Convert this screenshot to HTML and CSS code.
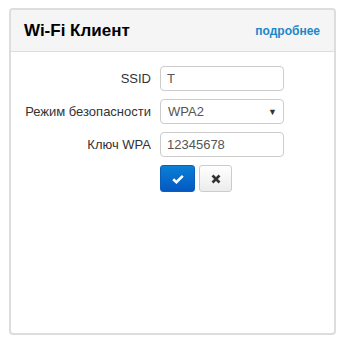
FILE: index.html
```html
<!DOCTYPE html>
<html lang="ru">
<head>
<meta charset="UTF-8">
<title>Wi-Fi Клиент</title>
<link rel="stylesheet" href="styles.css">
</head>
<body>
  <div class="panel">
    <div class="panel__head">
      <div class="panel__title">Wi-Fi Клиент</div>
      <a class="panel__more" href="#">подробнее</a>
    </div>
    <div class="panel__body">
      <div class="row">
        <label class="row__label" for="ssid">SSID</label>
        <input class="field" id="ssid" type="text" value="T">
      </div>
      <div class="row">
        <label class="row__label" for="mode">Режим безопасности</label>
        <div class="field field--select" id="mode">WPA2<span class="caret">▼</span></div>
      </div>
      <div class="row">
        <label class="row__label" for="key">Ключ WPA</label>
        <input class="field" id="key" type="text" value="12345678">
      </div>
      <div class="buttons">
        <button class="btn btn--ok">
          <svg width="12" height="10" viewBox="0 0 12 10"><path d="M1.2 5.2 L4.4 8.2 L10.8 1.8" fill="none" stroke="#fff" stroke-width="2.6"/></svg>
        </button>
        <button class="btn btn--cancel">
          <svg width="10" height="10" viewBox="0 0 10 10"><path d="M1.5 1.5 L8.5 8.5 M8.5 1.5 L1.5 8.5" fill="none" stroke="#333" stroke-width="2.6"/></svg>
        </button>
      </div>
    </div>
  </div>
</body>
</html>
```

FILE: styles.css
```css
body {
  margin: 0;
  padding: 8px 9px;
  font-family: Arial, "Liberation Sans", sans-serif;
  background: #fff;
}

.panel {
  width: 323px;
  height: 323px;
  border: 2px solid #dddddd;
  border-radius: 4px;
  box-sizing: content-box;
  background: #fff;
}

.panel__head {
  display: flex;
  justify-content: space-between;
  align-items: center;
  height: 41px;
  padding: 0 14px 0 13px;
  background: #f5f5f5;
  border-bottom: 1px solid #dddddd;
  border-radius: 3px 3px 0 0;
}

.panel__title {
  font-size: 17px;
  font-weight: bold;
  color: #000;
  padding-top: 1px;
}

.panel__more {
  font-size: 12px;
  font-weight: bold;
  color: #1c87c9;
  text-decoration: none;
}

.panel__body {
  padding-top: 14px;
}

.row {
  display: flex;
  align-items: center;
  margin-bottom: 8px;
}

.row__label {
  width: 140px;
  text-align: right;
  padding-right: 9px;
  font-size: 13px;
  color: #333;
}

.field {
  width: 124px;
  height: 25px;
  box-sizing: border-box;
  border: 1px solid #cccccc;
  border-radius: 4px;
  padding: 0 6px;
  font-family: Arial, "Liberation Sans", sans-serif;
  font-size: 13px;
  color: #555;
  background: #fff;
}

.field--select {
  display: flex;
  align-items: center;
  justify-content: space-between;
  padding: 0 6px 0 7px;
}

.caret {
  font-size: 9px;
  color: #333;
}

.buttons {
  display: flex;
  gap: 4px;
  padding-left: 149px;
}

.btn {
  height: 27px;
  border-radius: 3px;
  display: flex;
  align-items: center;
  justify-content: center;
  padding: 0;
}

.btn--ok {
  width: 35px;
  border: 1px solid #0d5fb5;
  background: linear-gradient(#0a7fd6, #0559c2);
}

.btn--cancel {
  width: 33px;
  border: 1px solid #cccccc;
  background: linear-gradient(#ffffff, #ececec);
}
```
